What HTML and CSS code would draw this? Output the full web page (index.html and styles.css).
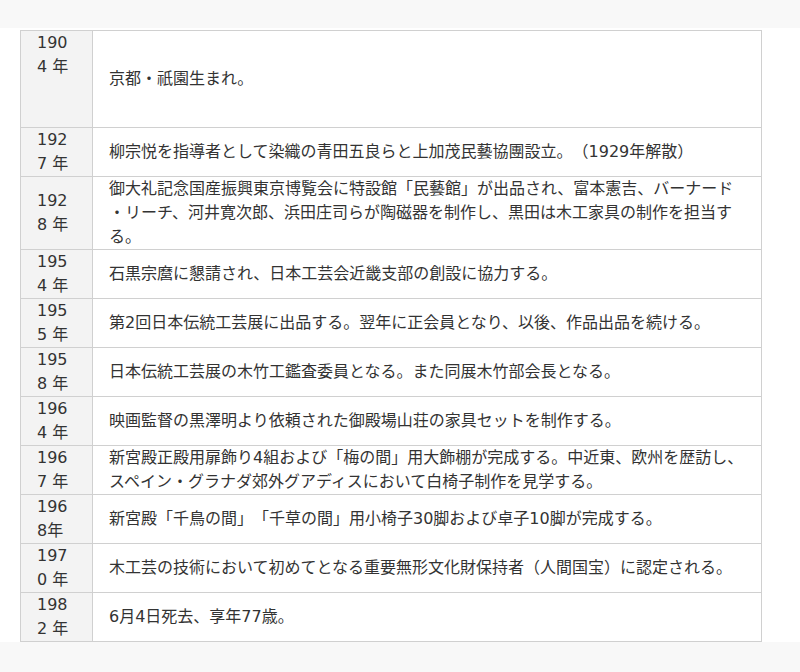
FILE: index.html
```html
<!DOCTYPE html>
<html lang="ja">

<head>
    <meta charset="UTF-8">
    <meta name="viewport" content="width=device-width, initial-scale=1.0">
    <title>略年譜</title>
    <link rel="stylesheet" href="styles.css">
</head>

<body>
    <div class="top-bar"></div>

    <div class="content">
        <!-- Chronology -->
        <table class="history">
            <colgroup>
                <col class="year-col">
                <col>
            </colgroup>
            <tbody>
                <tr class="first">
                    <th>1904 年</th>
                    <td>京都・祇園生まれ。</td>
                </tr>
                <tr>
                    <th>1927 年</th>
                    <td>柳宗悦を指導者として染織の青田五良らと上加茂民藝協團設立。（1929年解散）</td>
                </tr>
                <tr>
                    <th>1928 年</th>
                    <td>御大礼記念国産振興東京博覧会に特設館「民藝館」が出品され、富本憲吉、バーナード・リーチ、河井寛次郎、浜田庄司らが陶磁器を制作し、黒田は木工家具の制作を担当する。</td>
                </tr>
                <tr>
                    <th>1954 年</th>
                    <td>石黒宗麿に懇請され、日本工芸会近畿支部の創設に協力する。</td>
                </tr>
                <tr>
                    <th>1955 年</th>
                    <td>第2回日本伝統工芸展に出品する。翌年に正会員となり、以後、作品出品を続ける。</td>
                </tr>
                <tr>
                    <th>1958 年</th>
                    <td>日本伝統工芸展の木竹工鑑査委員となる。また同展木竹部会長となる。</td>
                </tr>
                <tr>
                    <th>1964 年</th>
                    <td>映画監督の黒澤明より依頼された御殿場山荘の家具セットを制作する。</td>
                </tr>
                <tr>
                    <th>1967 年</th>
                    <td>新宮殿正殿用扉飾り4組および「梅の間」用大飾棚が完成する。中近東、欧州を歴訪し、スペイン・グラナダ郊外グアディスにおいて白椅子制作を見学する。</td>
                </tr>
                <tr>
                    <th>1968年</th>
                    <td>新宮殿「千鳥の間」「千草の間」用小椅子30脚および卓子10脚が完成する。</td>
                </tr>
                <tr>
                    <th>1970 年</th>
                    <td>木工芸の技術において初めてとなる重要無形文化財保持者（人間国宝）に認定される。</td>
                </tr>
                <tr>
                    <th>1982 年</th>
                    <td>6月4日死去、享年77歳。</td>
                </tr>
            </tbody>
        </table>
    </div>
</body>

</html>
```

FILE: styles.css
```css
body {
    font-family: "DejaVu Sans", "Noto Sans CJK JP", sans-serif;
    font-size: 16px;
    line-height: 24px;
    background-color: #f8f8f8;
    color: #333;
    margin: 0;
    padding: 0;
}

.top-bar {
    height: 28px;
}

.content {
    background-color: #fff;
    padding: 2px 0 0 20px;
}

.history {
    width: 742px;
    border-collapse: collapse;
    table-layout: fixed;
}

.history .year-col {
    width: 72px;
}

.history th,
.history td {
    border: 1px solid #d0d0d0;
    padding: 0 16px;
    vertical-align: middle;
}

.history th {
    background-color: #f3f3f3;
    font-weight: normal;
    text-align: left;
    word-break: break-all;
}

.history td {
    line-break: anywhere;
    text-spacing-trim: space-all;
}

.history tr.first {
    height: 97px;
}

.history tr.first th {
    vertical-align: top;
}
```
